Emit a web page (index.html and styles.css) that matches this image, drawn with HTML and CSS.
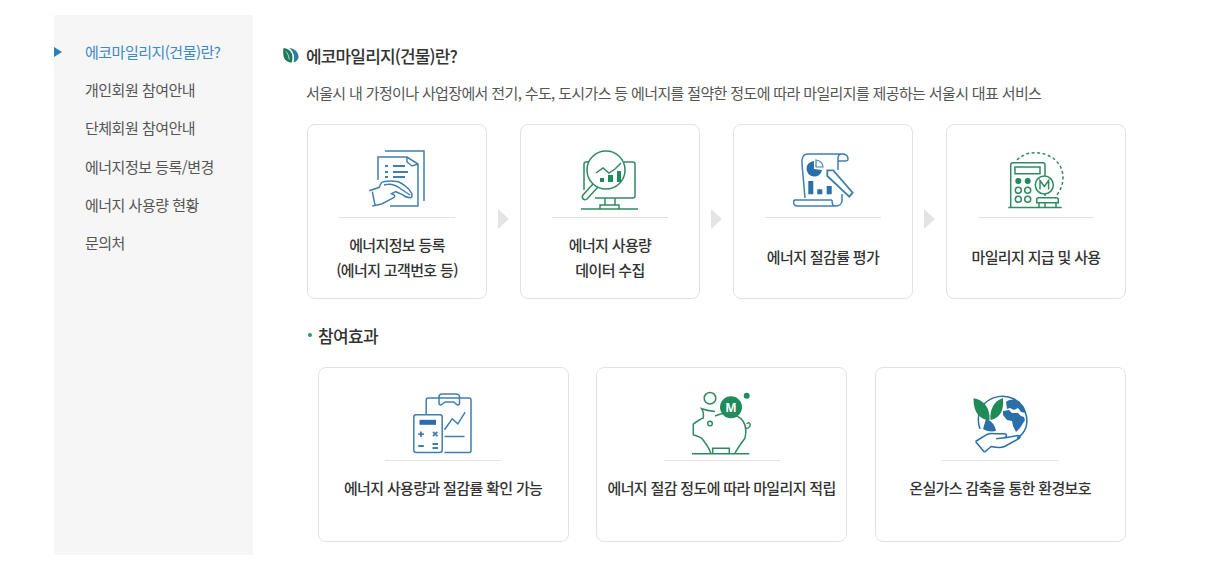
FILE: index.html
```html
<!DOCTYPE html>
<html lang="ko">
<head>
  <meta charset="UTF-8">
  <meta name="viewport" content="width=device-width, initial-scale=1.0">
  <title>에코마일리지(건물)란?</title>
  <link rel="stylesheet" href="styles.css">
</head>
<body>
  <div class="wrap">
    <ul class="side-menu">
      <li class="on">에코마일리지(건물)란?</li>
      <li>개인회원 참여안내</li>
      <li>단체회원 참여안내</li>
      <li>에너지정보 등록/변경</li>
      <li>에너지 사용량 현황</li>
      <li>문의처</li>
    </ul>

    <div class="content">
      <h2 class="title">
        <svg class="leaf" width="16" height="16" viewBox="0 0 16 16">
          <path d="M0.5 1C4 1.500 7 3 8.500 6c1.200 2.600 1.300 6 .3 9.500C4.500 15.500 1.500 13 .6 9.500 0 6.500 0 4 .5 1z" fill="#1f7a5c"/>
          <path d="M6 1c4 .3 7 2 8.500 5 1 2 1.300 3.500 1 5-.8 2-2.500 3.500-5 4.500 1-3.500.8-7-.6-10C9 3.500 7.700 2.200 6 1z" fill="#2a7f9e"/>
          <path d="M3 4.500c1.800 2 3 5 3.200 8" fill="none" stroke="#fff" stroke-width="0.700"/>
        </svg>
        에코마일리지(건물)란?
      </h2>
      <p class="desc">서울시 내 가정이나 사업장에서 전기, 수도, 도시가스 등 에너지를 절약한 정도에 따라 마일리지를 제공하는 서울시 대표 서비스</p>

      <div class="steps">
        <div class="card">
          <div class="icon">
            <svg class="blue" width="60" height="60" viewBox="0 0 60 60">
              <path d="M18 1h39v50"/>
              <path d="M11 30V7h29l11 7v42H23M40 7v5l5 4 6-2"/>
              <path d="M18 16h3M26 16h12M18 22h3M26 22h15M18 27h3M26 27h12" stroke-width="1.800"/>
              <path d="M2.300 40.700l10-3.400c1-3 2-5.600 4-5.600 5-1 10-1 15 0 5 2 11 7 13.400 11.600.5 2.500.5 4.400-1 4.400-3 0-6-1-8-3-2-1-5-2-7-3l-4 2c3 1 4 3 2 4l-12 6.300"/>
              <path d="M5.300 41.700L8 55M5.300 56l9.400-2"/>
              <path d="M17 35c6-2 12 0 17 4 3 2 6 4 9 6"/>
            </svg>
          </div>
          <p class="label">에너지정보 등록<br>(에너지 고객번호 등)</p>
        </div>
        <span class="arrow"></span>
        <div class="card">
          <div class="icon">
            <svg class="green" width="60" height="60" viewBox="0 0 60 60">
              <path d="M9 12H6a2 2 0 0 0-2 2v26M44 12h9a2 2 0 0 1 2 2v32a2 2 0 0 1-2 2H15"/>
              <circle cx="26" cy="20" r="19"/>
              <path d="M16 23l7-5 6 5 6-4 6-6"/>
              <path d="M20 28h4v4h-4zM28 25h5v7h-5zM37 21h4v11h-4z" class="solid"/>
              <path d="M13 34L3 45c-2 3 1 6 4 4l11-12M25 48v7M35 48v7M20 59v-4h19v4M1 59h57"/>
            </svg>
          </div>
          <p class="label">에너지 사용량<br>데이터 수집</p>
        </div>
        <span class="arrow"></span>
        <div class="card">
          <div class="icon">
            <svg class="blue" width="60" height="60" viewBox="0 0 60 60">
              <path d="M12 48L9 14C8.500 8 10 4 15 4h34c4 0 6 2 6 5 0 2-1 2-3 2h-7V20M45 11V8c0-3 2-4 4-4"/>
              <path d="M1 50h38M1 50c-1 3 0 6 3 6h38c4 0 7-2 7-5v-7M39 50c0 3 1 6 3 6"/>
              <path d="M21 11a7.800 7.800 0 1 0 8 9l-8-1z" class="solid"/>
              <path d="M23 10a7.500 7.500 0 0 1 7 7h-7z" stroke-width="1.200"/>
              <path d="M15.300 31h5v13.300h-5zM24.300 39.300h5v5h-5zM33.700 36h5v8.300h-5z" class="solid"/>
              <path d="M34.300 20.300h6L59.700 42.700l-3.400 4-22-20.700z" stroke-width="1.800"/>
            </svg>
          </div>
          <p class="label">에너지 절감률 평가</p>
        </div>
        <span class="arrow"></span>
        <div class="card">
          <div class="icon">
            <svg class="green" width="60" height="60" viewBox="0 0 60 60">
              <path d="M11 10C17 4 24 2.500 31 2.700c15 1 26 11 26 25 0 6-2 12-6 17" stroke-dasharray="3 2.500"/>
              <path d="M4.700 57V15c0-1.500 1-2.300 2.300-2.300h30c1.300 0 2 .8 2 2.300v11M39 44v2M39 53v4"/>
              <path d="M9 17h25v6.700H9z"/>
              <circle cx="12.300" cy="31" r="3" class="solid"/>
              <circle cx="21.700" cy="31" r="3" class="solid"/>
              <circle cx="12.300" cy="40.300" r="3"/><circle cx="21.700" cy="40.300" r="3"/>
              <circle cx="12.300" cy="49.300" r="3"/><circle cx="21.700" cy="49.300" r="3"/>
              <circle cx="38.300" cy="35" r="9"/>
              <path d="M34 39.500v-9l4.300 6 4.300-6v9"/>
              <path d="M30.700 52.700v-3a2 2 0 0 1 2-2h17.600a2 2 0 0 1 2 2v3zM33 52.700V57M50 52.700V57M2.300 57.500h53.400"/>
            </svg>
          </div>
          <p class="label">마일리지 지급 및 사용</p>
        </div>
      </div>

      <h3 class="sub-title"><span class="dot"></span>참여효과</h3>

      <div class="effects">
        <div class="card">
          <div class="icon">
            <svg class="blue" width="60" height="60" viewBox="0 0 60 60">
              <path d="M13.200 21V7a2 2 0 0 1 2-2H26M46 5h10a2 2 0 0 1 2 2v50.500a2 2 0 0 1-2 2H31.500"/>
              <path d="M26 4c0-2 1-3 3-3h14c2 0 3.500 1 3.500 3v6c0 1.500-1 2-2 2l-4-3H32l-4 3c-1 0-2-.5-2-2z"/>
              <path d="M26 5h20"/>
              <rect x="0.800" y="21.800" width="28.400" height="37.700" rx="2.500"/>
              <path d="M6.500 26.800H23v5H6.500z" class="solid"/>
              <path d="M8 38.500v5.500M5.200 41.200h5.600M20 38.800l4.400 4.400M24.400 38.800L20 43.200M5.200 53h5.600M19.500 51h5.500M19.500 55h5.500" stroke-width="1.800"/>
              <path d="M31.500 36.800l7.700-11 5.600 5 7.400-11.600M31.500 43.500h20"/>
            </svg>
          </div>
          <p class="label">에너지 사용량과 절감률 확인 가능</p>
        </div>
        <div class="card">
          <div class="icon">
            <svg class="green" width="60" height="60" viewBox="0 0 60 60">
              <circle cx="18" cy="5.200" r="5.800"/>
              <circle cx="39" cy="14.200" r="11" class="solid"/>
              <text x="39" y="18.500" class="coin">M</text>
              <circle cx="54.700" cy="2.800" r="3" class="solid"/>
              <path d="M23 18.500C18 18 13 17 9.700 15.800c2 3 2 6 1.600 9.200-3 1-6 3-10 6.200v10.600c3 1 6 2 8.400 3.400 3 4 7 8 9 15"/>
              <path d="M23 23c4-2 8-3 12-2.800 7 .5 13 3.500 16.300 8.300 3 5 3 11 1.700 16.700-3 4-7 9-10 15"/>
              <path d="M20.700 60.200v-5h16.600v5"/>
              <path d="M53 35c3 1 6-1 5-4-1-2-3-1-3 0"/>
              <path d="M0 60.800h57.300"/>
              <circle cx="18" cy="30.500" r="2.300"/>
            </svg>
          </div>
          <p class="label">에너지 절감 정도에 따라 마일리지 적립</p>
        </div>
        <div class="card">
          <div class="icon">
            <svg class="blue dark" width="60" height="60" viewBox="0 0 60 60">
              <path d="M10 36C7 28 8 18 14 11c8-8 20-10 30-5 10 6 15 17 12 28-2 6-5 9-9 11"/>
              <path d="M36 9c4-3 9-3 13-1l5 6 2 6-5-1-3-4-4 2-4-2-3 1z" class="solid"/>
              <path d="M33 18l6-1 3 3 6 0 3 3 3 1 1 3-5 8-4 4-3-6-1-5-5-1-4-5z" class="solid"/>
              <path d="M16 26c5 1 9 6 10 12-5 1-10 0-13-2z" class="solid"/>
              <path d="M19 27C11 27 3 20 3.500 5.200c9 1 17 9 16 21.800z" class="leaf-solid"/>
              <path d="M20.500 27c-1-10 3-19 12.500-22 1 11-2 20-12.500 22z" class="leaf-solid"/>
              <path d="M5.500 48.500l10.700-6.700c3-1.500 6-1.500 9-1h9c3 0 3 3.500 0 4l-8 1M34 45l14-2.500c2.500 0 2.500 2 1 3L34.500 53.500c-4 2-9 1-13.300 0l-6.700 5.700M5.500 48.500l9 10.700"/>
            </svg>
          </div>
          <p class="label">온실가스 감축을 통한 환경보호</p>
        </div>
      </div>
    </div>
  </div>
</body>
</html>
```

FILE: styles.css
```css
* { box-sizing: border-box; }
body { margin: 0; background: #fff; color: #333; font-family: "Noto Sans CJK KR", "Noto Sans", sans-serif; font-size: 15px; overflow: hidden; }
ul, h2, h3, p { margin: 0; padding: 0; }

.wrap { display: flex; padding: 15px 0 0 54px; }

.side-menu { width: 199px; height: 540px; padding-top: 18px; background: #f6f6f6; list-style: none; }
.side-menu li { position: relative; height: 38.2px; padding-left: 31px; line-height: 38px; font-size: 15px; letter-spacing: -0.5px; color: #555; white-space: nowrap; }
.side-menu li.on { color: #3d8ac4; }
.side-menu li.on::before { content: ""; position: absolute; left: 0; top: 14px; border-left: 8px solid #2b7fbd; border-top: 5px solid transparent; border-bottom: 5px solid transparent; }

.content { width: 873px; padding: 24px 0 0 30px; }

.title { display: flex; align-items: center; gap: 7px; height: 32px; font-size: 17px; font-weight: 500; letter-spacing: -0.85px; color: #333; }
.leaf { flex: none; }
.desc { margin: 10px 0 0 23px; height: 28px; line-height: 24px; font-size: 15px; letter-spacing: -0.64px; color: #555; white-space: nowrap; }

.steps { display: flex; align-items: center; margin: 15px 0 0 24px; }
.steps .card { width: 180px; height: 175px; }
.arrow { width: 33px; display: flex; justify-content: center; padding-top: 14px; }
.arrow::before { content: ""; border-left: 11px solid #e4e4e4; border-top: 10px solid transparent; border-bottom: 10px solid transparent; }

.card { display: flex; flex-direction: column; align-items: center; border: 1px solid #e2e2e2; border-radius: 8px; background: #fff; }
.icon { display: flex; align-items: center; justify-content: center; width: 116px; height: 93px; padding-top: 24px; padding-bottom: 7px; border-bottom: 1px solid #e2e2e2; flex: none; }
.icon svg { overflow: visible; fill: none; stroke-width: 1.5; }
.blue { stroke: #3f7fb0; }
.green { stroke: #2f8a5f; }
.blue .solid { fill: #2a6fa8; stroke: none; }
.green .solid { fill: #1f8a5a; stroke: none; }
.dark { stroke: #2a6fa8; }
.leaf-solid { fill: #1f8a55; stroke: none; }
.label { flex: 1; display: flex; align-items: center; padding-bottom: 3px; text-align: center; line-height: 25px; font-size: 15px; font-weight: 500; letter-spacing: -0.65px; color: #333; white-space: nowrap; }

.sub-title { display: flex; align-items: center; margin: 24px 0 0 25px; height: 24px; font-size: 17px; font-weight: 500; letter-spacing: -0.65px; color: #333; }
.dot { width: 4px; height: 4px; margin-right: 6px; border-radius: 50%; background: #2f9a6a; }

.effects { display: flex; gap: 27.5px; margin: 20px 0 0 34.6px; }
.effects .card { width: 251px; height: 175px; }
.effects .label { flex: none; margin-top: 14px; padding-bottom: 0; }
.coin { font-family: "Noto Sans", sans-serif; font-size: 12px; font-weight: 700; fill: #fff; stroke: none; text-anchor: middle; }
```
